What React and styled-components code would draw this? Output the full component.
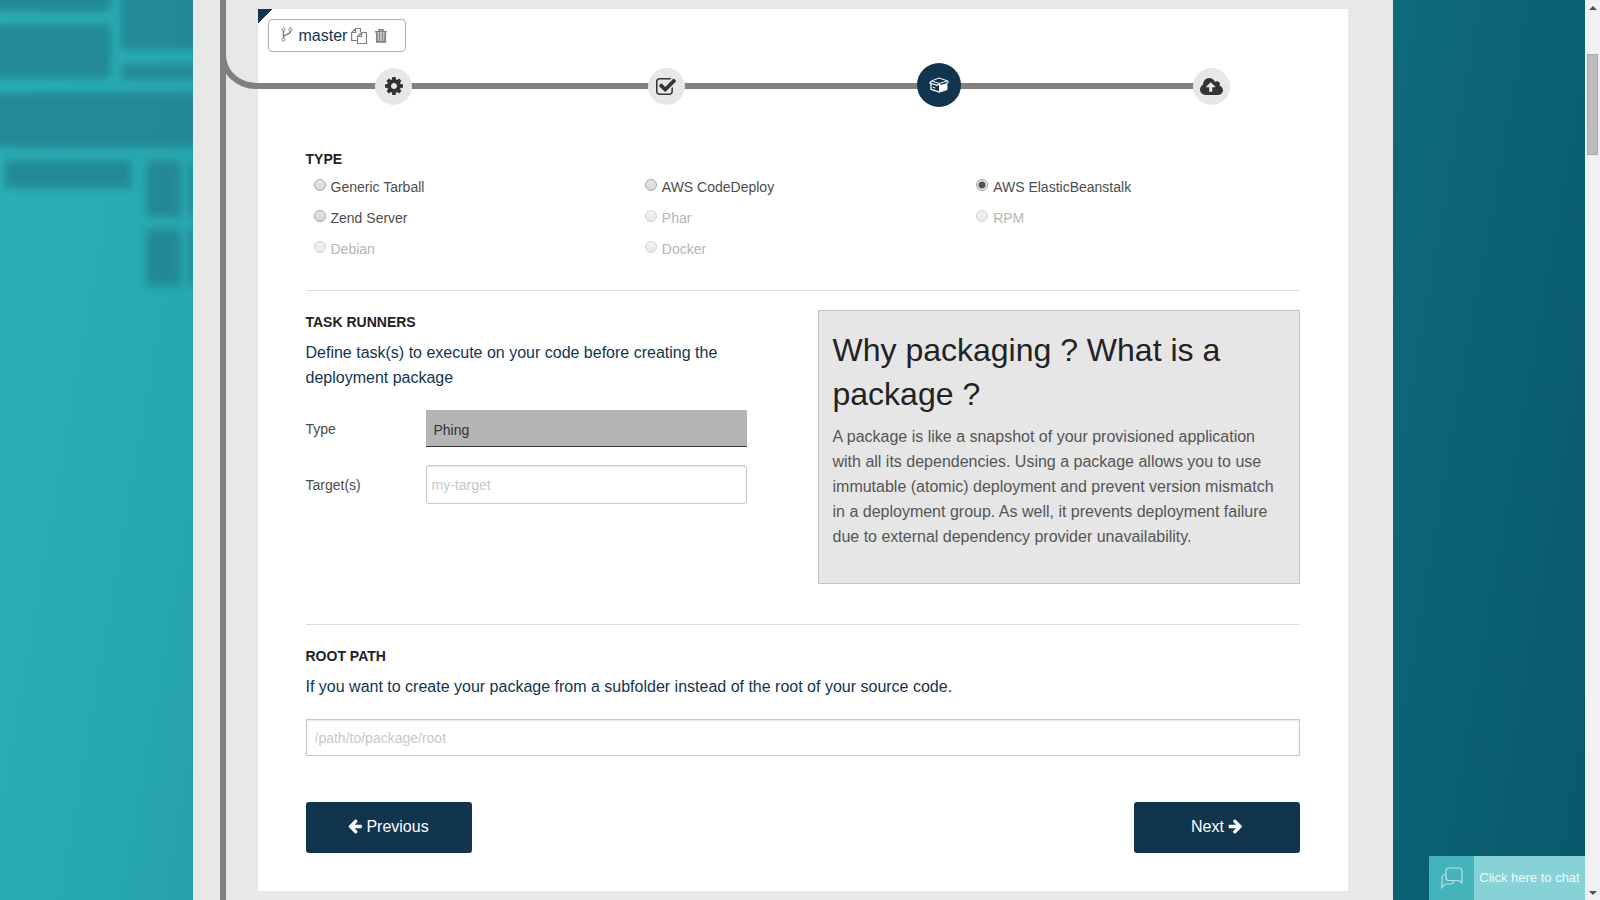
import React from "react";
import styled, { createGlobalStyle, css } from "styled-components";

const GlobalStyle = createGlobalStyle`
  *, *::before, *::after { box-sizing: border-box; }
  body {
    margin: 0;
    font-family: "Liberation Sans", Arial, sans-serif;
    font-size: 14px;
    line-height: 20px;
    color: #4d4d4d;
    background: #f1f1f1;
  }
  h2, h3, p, fieldset { margin: 0; padding: 0; border: 0; }
  button, input, select { font: inherit; margin: 0; }
  svg { display: block; }
`;

const navy = "#12354f";
const rail = "#808080";

const Window = styled.div`
  display: flex;
  min-height: 100vh;
`;

const Backdrop = styled.div`
  position: relative;
  flex: 1;
  min-width: 0;
  overflow: hidden;
  background: linear-gradient(100deg, #2bb0b6 0%, #28aab1 12%, #0d6577 85%, #07586a 100%);
`;

const Blocks = styled.svg`
  position: absolute;
  top: 0;
  left: 0;
`;

const Shell = styled.main`
  position: relative;
  display: flex;
  width: 100%;
  max-width: 1200px;
  min-height: 100vh;
  margin: 0 auto;
  padding-left: 27px;
  background: #e8e8e8;
`;

const Rail = styled.div`
  flex: none;
  width: 6px;
  background: ${rail};
`;

const Card = styled.section`
  flex: 1;
  min-width: 0;
  margin: 9px 45px 9px 32px;
  background: linear-gradient(135deg, ${navy} 10px, #fff 10px);
`;

const BranchBar = styled.header`
  padding: 10px 10px 0;
`;

const Branch = styled.div`
  display: inline-flex;
  align-items: center;
  height: 33px;
  padding: 0 18px 0 12px;
  vertical-align: top;
  border: 1px solid #b0b0b0;
  border-radius: 4px;
  background: #fff;
  color: ${rail};
`;

const BranchName = styled.a`
  margin: 0 4px 0 6px;
  font-size: 16px;
  color: ${navy};
  text-decoration: none;
`;

const IconButton = styled.button`
  display: flex;
  padding: 0;
  border: 0;
  background: none;
  color: inherit;
  cursor: pointer;
  & + & { margin-left: 8px; }
`;

const Steps = styled.nav`
  position: relative;
  display: grid;
  grid-template-columns: repeat(4, 1fr);
  align-items: center;
  justify-items: center;
  height: 46px;
  margin-top: 11px;
  background: linear-gradient(${rail}, ${rail}) 0 50% / 87% 6px no-repeat;

  &::before {
    content: "";
    position: absolute;
    left: -38px;
    bottom: 20px;
    width: 38px;
    height: 40px;
    border: solid ${rail};
    border-width: 0 0 6px 6px;
    border-bottom-left-radius: 36px 34px;
  }
`;

const Step = styled.button`
  display: flex;
  align-items: center;
  justify-content: center;
  width: 37px;
  height: 37px;
  padding: 0;
  border: 0;
  border-radius: 50%;
  background: #e7e7e7;
  color: #333;
  cursor: pointer;
  ${(p) => p.$active && css`
    align-self: start;
    width: 44px;
    height: 44px;
    background: ${navy};
    color: #fff;
  `}
`;

const Form = styled.form`
  padding: 40px 48px 38px;
`;

const Heading = styled.h3`
  font-size: 14px;
  line-height: 20px;
  font-weight: bold;
  color: #222;
  text-transform: uppercase;
`;

const Lead = styled.p`
  margin: 8px 0 20px;
  font-size: 16px;
  line-height: 25px;
  color: ${navy};
`;

const Section = styled.section`
  padding-top: ${(p) => p.$top || 0}px;
  padding-bottom: ${(p) => p.$bottom || 0}px;
  & + & { border-top: 1px solid #ddd; }
`;

const Options = styled.fieldset`
  display: grid;
  grid-template-columns: repeat(3, 1fr);
  grid-auto-rows: 31px;
  margin-top: 2px;
`;

const Option = styled.label`
  display: flex;
  align-items: center;
  gap: 5px;
  padding-left: 8px;
  color: ${(p) => (p.$disabled ? "#b5b5b5" : "#4d4d4d")};
`;

const Radio = styled.input`
  appearance: none;
  width: 12px;
  height: 12px;
  margin-bottom: 4px;
  border: 1px solid #a6a6a6;
  border-radius: 50%;
  background: linear-gradient(#e8e8e8, #d6d6d6);
  &:checked { background: radial-gradient(circle, #555 0 3px, #e6e6e6 4px); }
  &:disabled { border-color: #d2d2d2; background: linear-gradient(#f2f2f2, #e8e8e8); }
`;

const Columns = styled.div`
  display: grid;
  grid-template-columns: 441fr 482fr;
  column-gap: 71px;
`;

const Runner = styled.div`
  padding-top: 2px;
`;

const Field = styled.div`
  display: grid;
  grid-template-columns: 120px 1fr;
  align-items: center;
  & + & { margin-top: 18px; }
`;

const Select = styled.select`
  appearance: none;
  width: 100%;
  height: 37px;
  padding: 4px 8px 0;
  border: 0;
  border-bottom: 1px solid #333;
  border-radius: 0;
  background: #b5b5b5;
  color: #333;
`;

const TextInput = styled.input`
  display: block;
  width: 100%;
  height: ${(p) => (p.$rounded ? 39 : 37)}px;
  padding: 0 ${(p) => (p.$rounded ? 5 : 8)}px;
  border: 1px solid #c8c8c8;
  border-radius: ${(p) => (p.$rounded ? 3 : 0)}px;
  box-shadow: inset 0 1px 2px rgba(0, 0, 0, 0.1);
  background: #fff;
  color: #4d4d4d;
  &::placeholder { color: #c8c8c8; opacity: 1; }
`;

const Note = styled.aside`
  padding: 17px 14px 34px;
  border: 1px solid #c4c4c4;
  background: #e6e6e6;
`;

const NoteTitle = styled.h2`
  font-size: 32px;
  line-height: 44px;
  font-weight: normal;
  color: #222;
`;

const NoteText = styled.p`
  margin-top: 8px;
  font-size: 16px;
  line-height: 25px;
  color: #555;
`;

const Actions = styled.footer`
  display: flex;
  justify-content: space-between;
  padding-top: 46px;
`;

const Action = styled.button`
  display: flex;
  align-items: center;
  justify-content: center;
  gap: 4px;
  width: 166px;
  height: 51px;
  padding: 0 0 2px;
  border: 0;
  border-radius: 3px;
  background: ${navy};
  color: #fff;
  font-size: 16px;
  cursor: pointer;
`;

const Chat = styled.button`
  position: fixed;
  right: 15px;
  bottom: 0;
  display: flex;
  width: 156px;
  height: 44px;
  padding: 0;
  border: 0;
  border-radius: 2px 0 0 0;
  overflow: hidden;
  background: #87d2d6;
  color: #effafa;
  font-size: 13px;
  cursor: pointer;
`;

const ChatIcon = styled.span`
  display: flex;
  align-items: center;
  justify-content: center;
  width: 45px;
  height: 100%;
  background: #45b4ba;
  color: #b4e3e5;
`;

const ChatText = styled.span`
  flex: 1;
  align-self: center;
  white-space: nowrap;
`;

const Scrollbar = styled.div`
  position: sticky;
  top: 0;
  display: flex;
  flex-direction: column;
  align-items: center;
  width: 15px;
  height: 100vh;
  padding: 6px 0 5px;
  background: #f1f1f1;
`;

const Arrow = styled.span`
  border: solid transparent;
  border-width: ${(p) => (p.$down ? "4px 4px 0" : "0 4px 4px")};
  border-color: #505050 transparent;
`;

const Thumb = styled.span`
  width: 11px;
  height: 101px;
  margin: 44px 0 auto;
  border: 1px solid #a8a8a8;
  background: #bcbcbc;
`;

const solid = {
  gear: {
    box: "128 128 1536 1536",
    d: "M1152 896q0-106-75-181t-181-75-181 75-75 181 75 181 181 75 181-75 75-181zm512-109v222q0 12-8 23t-20 13l-185 28q-19 54-39 91 35 50 107 138 10 12 10 25t-9 23q-27 37-99 108t-94 71q-12 0-26-9l-138-108q-44 23-91 38-16 136-29 186-7 28-36 28h-222q-14 0-24.5-8.5t-11.5-21.5l-28-184q-49-16-90-37l-141 107q-10 9-25 9-14 0-25-11-126-114-165-168-7-10-7-23 0-12 8-23 15-21 51-66.5t54-70.5q-27-50-41-99l-183-27q-13-2-21-12.5t-8-23.5v-222q0-12 8-23t19-13l186-28q14-46 39-92-40-57-107-138-10-12-10-24 0-10 9-23 26-36 98.5-107.5t94.5-71.5q13 0 26 10l138 107q44-23 91-38 16-136 29-186 7-28 36-28h222q14 0 24.5 8.5t11.5 21.5l28 184q49 16 90 37l142-107q9-9 24-9 13 0 25 10 129 119 165 170 7 8 7 22 0 12-8 23-15 21-51 66.5t-54 70.5q26 50 41 98l183 28q13 2 21 12.5t8 23.5z",
  },
  check: {
    box: "64 128 1664 1408",
    d: "M1472 930v318q0 119-84.5 203.5t-203.5 84.5h-832q-119 0-203.5-84.5t-84.5-203.5v-832q0-119 84.5-203.5t203.5-84.5h832q63 0 117 25 15 7 18 23 3 17-9 29l-49 49q-10 10-23 10-3 0-9-2-23-6-45-6h-832q-66 0-113 47t-47 113v832q0 66 47 113t113 47h832q66 0 113-47t47-113v-254q0-13 9-22l64-64q10-10 23-10 6 0 12 3 20 8 20 29zm231-489l-814 814q-24 24-57 24t-57-24l-430-430q-24-24-24-57t24-57l110-110q24-24 57-24t57 24l263 263 647-647q24-24 57-24t57 24l110 110q24 24 24 57t-24 57z",
  },
  cloud: {
    box: "-64 128 1920 1408",
    d: "M1216 864q0-14-9-23l-352-352q-9-9-23-9t-23 9l-351 351q-10 12-10 24 0 14 9 23t23 9h224v352q0 13 9.5 22.5t22.5 9.5h192q13 0 22.5-9.5t9.5-22.5v-352h224q13 0 22.5-9.5t9.5-22.5zm640 288q0 159-112.5 271.5t-271.5 112.5h-1088q-185 0-316.5-131.5t-131.5-316.5q0-130 70-240t188-165q-2-30-2-43 0-212 150-362t362-150q156 0 285.5 87t188.5 231q71-62 166-62 106 0 181 75t75 181q0 76-41 138 130 31 213.5 135.5t83.5 238.5z",
  },
  left: {
    box: "128 128 1536 1664",
    d: "M1664 896v128q0 53-32.5 90.5t-84.5 37.5h-704l293 294q38 36 38 90t-38 90l-75 76q-37 37-90 37-52 0-91-37l-651-652q-37-37-37-90 0-52 37-91l651-650q38-38 91-38 52 0 90 38l75 74q38 38 38 91t-38 91l-293 293h704q52 0 84.5 37.5t32.5 90.5z",
  },
  right: {
    box: "64 128 1536 1664",
    d: "M1600 960q0 54-37 91l-651 651q-39 37-91 37-51 0-90-37l-75-75q-38-38-38-91t38-91l293-293h-704q-52 0-84.5-37.5t-32.5-90.5v-128q0-53 32.5-90.5t84.5-37.5h704l-293-294q-38-36-38-90t38-90l75-75q38-38 90-38 53 0 91 38l651 651q37 35 37 90z",
  },
};

const Glyph = ({ name, width, height }) => (
  <svg width={width} height={height} viewBox={solid[name].box} fill="currentColor" aria-hidden="true">
    <path d={solid[name].d} />
  </svg>
);

const ForkIcon = () => (
  <svg width="12" height="18" viewBox="0 0 12 18" fill="none" stroke="currentColor" aria-hidden="true">
    <circle cx="2.5" cy="2.5" r="1.5" />
    <circle cx="9.5" cy="2.5" r="1.5" />
    <circle cx="2.5" cy="12.5" r="1.5" />
    <path d="M2.5 4v7M9.500 4c0 4-6.500 3-7 6" strokeWidth="1.4" />
  </svg>
);

const CopyIcon = () => (
  <svg width="16" height="16" viewBox="0 0 16 16" fill="none" stroke="currentColor" strokeWidth="1.2" aria-hidden="true">
    <path d="M6 12.500H.6v-8l4-4h4.900V4M.6 4.500h4v-4" />
    <path d="M6.500 8.500l4-4h5v11h-9zM6.500 8.500h4v-4" fill="#fff" />
  </svg>
);

const TrashIcon = () => (
  <svg width="12" height="14" viewBox="0 0 12 14" fill="none" stroke="currentColor" aria-hidden="true">
    <path d="M4 2V.8h4V2M0 2.800h12" strokeWidth="1.6" />
    <path d="M1.800 3.500v9.400h8.400V3.500" fill="currentColor" fillOpacity="0.35" strokeWidth="1.8" />
    <path d="M4.500 4v8M7.500 4v8" strokeWidth="1.3" />
  </svg>
);

const BoxIcon = () => (
  <svg width="20" height="16" viewBox="0 0 20 16" fill="none" stroke="currentColor" strokeLinejoin="round" aria-hidden="true">
    <path d="M2.500 4L10 1l8.500 2.800-8 2.700z" />
    <path d="M2.500 4L.8 6l7.500 2.400 2.200-1.900" strokeWidth="1.2" />
    <path d="M2 7v5.300l8.500 2.900" strokeWidth="1.3" />
    <path d="M10.500 7l1.300 1.500 6.200-2v6.100l-7.500 2.600z" fill="currentColor" />
    <path d="M18.500 3.800l1 1.500-2 .8" />
    <path d="M3.800 10.200l2.400.8" />
  </svg>
);

const BubblesIcon = () => (
  <svg width="22" height="22" viewBox="0 0 22 22" fill="none" stroke="currentColor" strokeWidth="1.2" aria-hidden="true">
    <path d="M8 1h10q3 0 3 3v12.500q-1.500-3-4-3H8q-3 0-3-3V4q0-3 3-3z" />
    <path d="M5 7.500q-4 0-4 3.500v9.500q2-3.500 4.500-3.500h4q3 0 3.500-3.500" />
  </svg>
);

const options = [
  ["Generic Tarball", false],
  ["AWS CodeDeploy", false],
  ["AWS ElasticBeanstalk", false],
  ["Zend Server", false],
  ["Phar", true],
  ["RPM", true],
  ["Debian", true],
  ["Docker", true],
];

const blocks = [
  [-20, -20, 131, 32], [-20, 24, 131, 55], [121, -20, 100, 70], [121, 64, 100, 16],
  [-20, 92, 240, 56], [4, 160, 128, 28], [146, 160, 35, 57], [190, 160, 35, 57],
  [146, 229, 35, 57], [190, 229, 35, 57],
];

export default function App() {
  return (
    <Window>
      <GlobalStyle />
      <Backdrop>
        <Blocks width="240" height="310" aria-hidden="true">
          <filter id="soften"><feGaussianBlur stdDeviation="4" /></filter>
          <g fill="#1f7f8e" fillOpacity="0.8" filter="url(#soften)">
            {blocks.map(([x, y, width, height]) => (
              <rect key={`${x}-${y}`} x={x} y={y} width={width} height={height} />
            ))}
          </g>
        </Blocks>
        <Shell>
          <Rail />
          <Card>
            <BranchBar>
              <Branch>
                <ForkIcon />
                <BranchName href="#master">master</BranchName>
                <IconButton type="button" aria-label="Copy"><CopyIcon /></IconButton>
                <IconButton type="button" aria-label="Delete"><TrashIcon /></IconButton>
              </Branch>
            </BranchBar>
            <Steps aria-label="Steps">
              <Step type="button" aria-label="Settings"><Glyph name="gear" width={18} height={18} /></Step>
              <Step type="button" aria-label="Checks"><Glyph name="check" width={20} height={17} /></Step>
              <Step type="button" aria-label="Package" $active><BoxIcon /></Step>
              <Step type="button" aria-label="Deploy"><Glyph name="cloud" width={23} height={17} /></Step>
            </Steps>
            <Form onSubmit={(e) => e.preventDefault()}>
              <Section $bottom={26}>
                <Heading>Type</Heading>
                <Options aria-label="Type">
                  {options.map(([label, disabled]) => (
                    <Option key={label} $disabled={disabled}>
                      <Radio
                        type="radio"
                        name="package-type"
                        disabled={disabled}
                        defaultChecked={label === "AWS ElasticBeanstalk"}
                      />
                      {label}
                    </Option>
                  ))}
                </Options>
              </Section>
              <Section $top={19} $bottom={40}>
                <Columns>
                  <Runner>
                    <Heading>Task runners</Heading>
                    <Lead>Define task(s) to execute on your code before creating the deployment package</Lead>
                    <Field>
                      <label htmlFor="runner">Type</label>
                      <Select id="runner"><option>Phing</option></Select>
                    </Field>
                    <Field>
                      <label htmlFor="targets">Target(s)</label>
                      <TextInput id="targets" type="text" placeholder="my-target" $rounded />
                    </Field>
                  </Runner>
                  <Note>
                    <NoteTitle>Why packaging ? What is a package ?</NoteTitle>
                    <NoteText>
                      A package is like a snapshot of your provisioned application with all its
                      dependencies. Using a package allows you to use immutable (atomic) deployment
                      and prevent version mismatch in a deployment group. As well, it prevents
                      deployment failure due to external dependency provider unavailability.
                    </NoteText>
                  </Note>
                </Columns>
              </Section>
              <Section $top={21}>
                <Heading id="root-heading">Root path</Heading>
                <Lead>If you want to create your package from a subfolder instead of the root of your source code.</Lead>
                <TextInput type="text" aria-labelledby="root-heading" placeholder="/path/to/package/root" />
              </Section>
              <Actions>
                <Action type="button"><Glyph name="left" width={14} height={15} />Previous</Action>
                <Action type="submit">Next<Glyph name="right" width={14} height={15} /></Action>
              </Actions>
            </Form>
          </Card>
        </Shell>
      </Backdrop>
      <Scrollbar aria-hidden="true">
        <Arrow />
        <Thumb />
        <Arrow $down />
      </Scrollbar>
      <Chat type="button">
        <ChatIcon><BubblesIcon /></ChatIcon>
        <ChatText>Click here to chat</ChatText>
      </Chat>
    </Window>
  );
}
